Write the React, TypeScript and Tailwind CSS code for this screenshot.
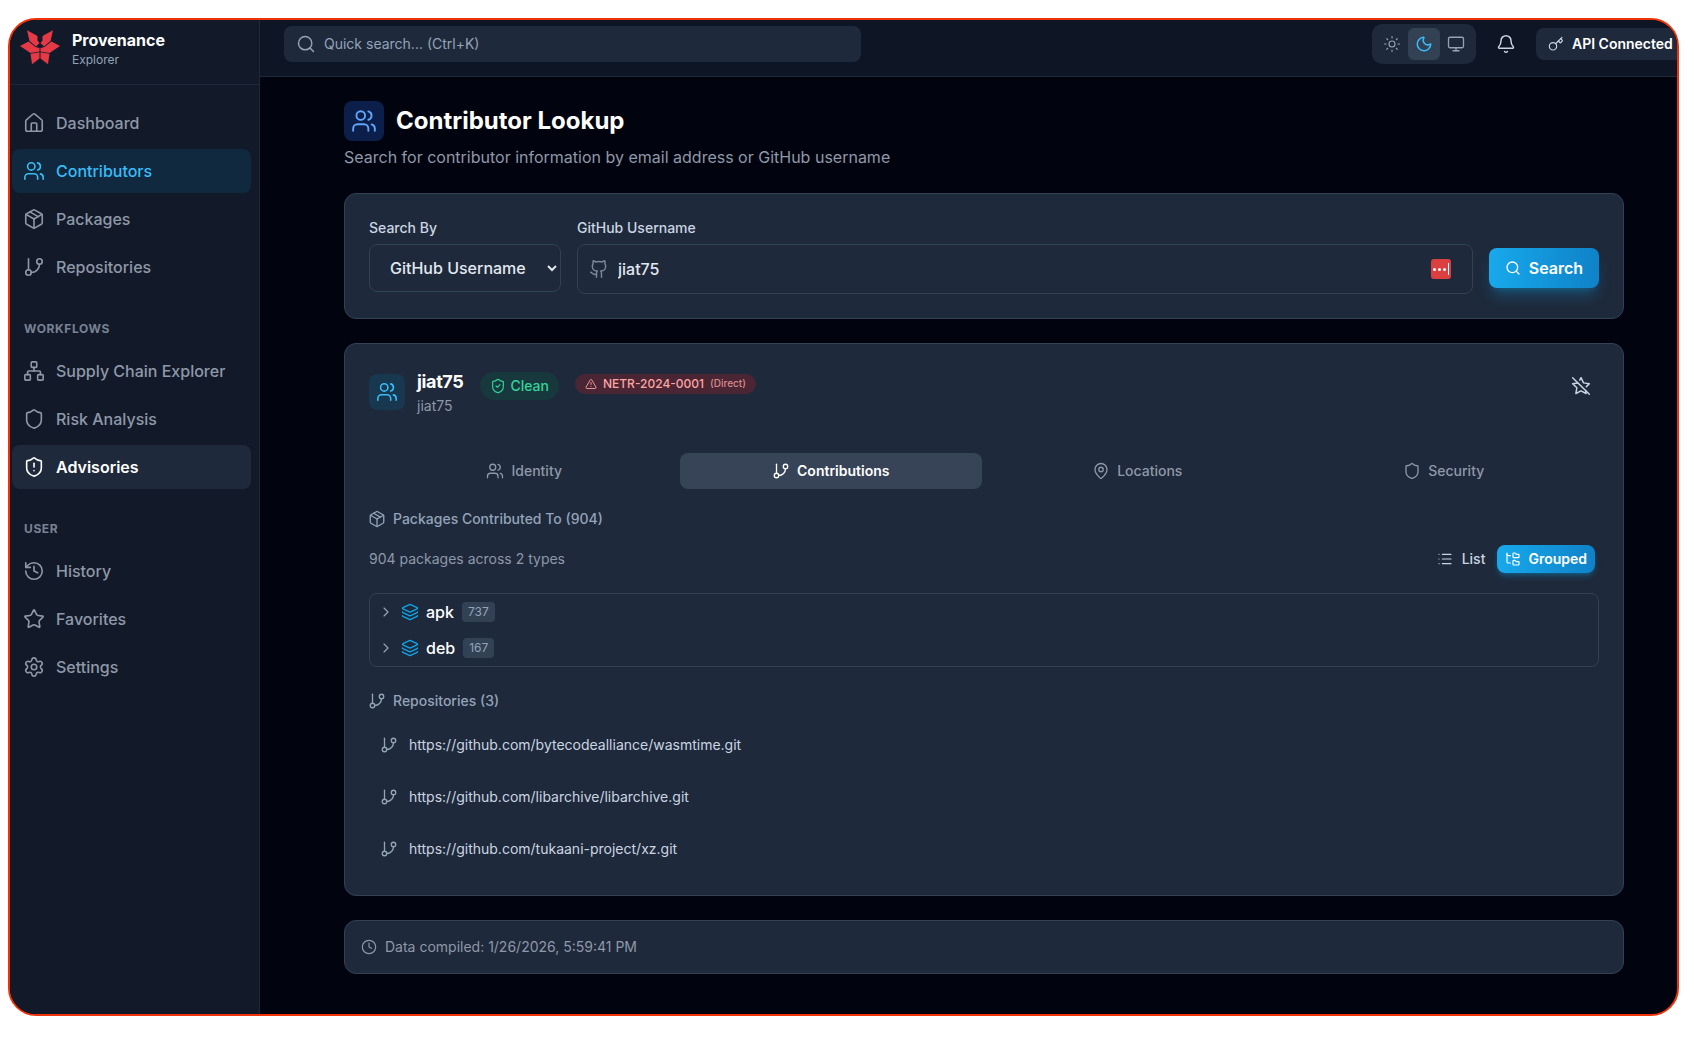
import {
  Bell,
  ChevronRight,
  Clock,
  FolderTree,
  GitBranch,
  Github,
  History,
  House,
  Key,
  Layers,
  List,
  MapPin,
  Monitor,
  Moon,
  Network,
  Package,
  Search,
  Settings,
  Shield,
  ShieldAlert,
  ShieldCheck,
  Star,
  StarOff,
  Sun,
  TriangleAlert,
  Users,
} from "lucide-react";

const mainNav = [
  { label: "Dashboard", icon: House },
  { label: "Contributors", icon: Users, active: "sky" },
  { label: "Packages", icon: Package },
  { label: "Repositories", icon: GitBranch },
];
const workflowNav = [
  { label: "Supply Chain Explorer", icon: Network },
  { label: "Risk Analysis", icon: Shield },
  { label: "Advisories", icon: ShieldAlert, active: "white" },
];
const userNav = [
  { label: "History", icon: History },
  { label: "Favorites", icon: Star },
  { label: "Settings", icon: Settings },
];

const tabs = [
  { label: "Identity", icon: Users },
  { label: "Contributions", icon: GitBranch, active: true },
  { label: "Locations", icon: MapPin },
  { label: "Security", icon: Shield },
];

const groups = [
  { name: "apk", count: 737 },
  { name: "deb", count: 167 },
];

const repos = [
  "https://github.com/bytecodealliance/wasmtime.git",
  "https://github.com/libarchive/libarchive.git",
  "https://github.com/tukaani-project/xz.git",
];

const Logo = () => (
  <svg viewBox="0 0 50 44" className="-mt-2 h-[44px] w-[50px] shrink-0 fill-[#e63946]">
    <polygon points="11,4.3 21.5,10 21.5,14.5 23.5,17 20,20.5 13.5,15" />
    <polygon points="37,4.3 26.5,10 26.5,14.5 24.5,17 28,20.5 34.5,15" />
    <polygon points="4,20 12.5,15.5 19.5,21 23.5,22 23.5,25.5 14.5,27" />
    <polygon points="44,20 35.5,15.5 28.5,21 24.5,22 24.5,25.5 33.5,27" />
    <polygon points="16,38.3 14.5,27.8 23.5,26.2 23.5,32.5" />
    <polygon points="32,38.3 33.5,27.8 24.5,26.2 24.5,32.5" />
  </svg>
);

type NavEntry = { label: string; icon: typeof House; active?: string };

const NavItem = ({ item }: { item: NavEntry }) => {
  const Icon = item.icon;
  const tone =
    item.active === "sky"
      ? "bg-[#10293f] text-[#38bdf8]"
      : item.active === "white"
        ? "bg-[#1e293b] text-white font-semibold"
        : "text-[#8f98a8]";
  return (
    <div className={`flex h-[44px] items-center gap-[11px] rounded-lg px-[11px] text-base font-medium ${tone}`}>
      <Icon className="h-[22px] w-[22px]" strokeWidth={1.75} />
      {item.label}
    </div>
  );
};

const SectionHeading = ({ children }: { children: React.ReactNode }) => (
  <div className="mt-8 mb-3 px-3 text-xs leading-4 font-bold tracking-wider text-[#788294] uppercase">{children}</div>
);

const Sidebar = () => (
  <aside className="flex w-[250px] shrink-0 flex-col border-r border-[#1e293b] bg-[#121a29]">
    <div className="flex h-[65px] items-center gap-[6px] border-b border-[#1e293b] pl-[6px]">
      <Logo />
      <div className="-mt-[7px]">
        <div className="text-base leading-5 font-bold text-white">Provenance</div>
        <div className="mt-[2px] text-xs leading-4 text-[#94a3b8]">Explorer</div>
      </div>
    </div>
    <nav className="flex flex-col pt-4 pr-2 pl-[2px]">
      <div className="flex flex-col gap-1">
        {mainNav.map((item) => (
          <NavItem key={item.label} item={item} />
        ))}
      </div>
      <SectionHeading>Workflows</SectionHeading>
      <div className="flex flex-col gap-1">
        {workflowNav.map((item) => (
          <NavItem key={item.label} item={item} />
        ))}
      </div>
      <SectionHeading>User</SectionHeading>
      <div className="flex flex-col gap-1">
        {userNav.map((item) => (
          <NavItem key={item.label} item={item} />
        ))}
      </div>
    </nav>
  </aside>
);

const TopBar = () => (
  <header className="flex h-[57px] shrink-0 items-center overflow-hidden border-b border-[#1e293b] bg-[#0e1524] pb-2 pl-6">
    <div className="flex h-9 w-[577px] shrink-0 items-center gap-2 rounded-lg bg-[#1e293b] pl-3 text-sm text-[#94a3b8]">
      <Search className="h-5 w-5" strokeWidth={1.75} />
      Quick search... (Ctrl+K)
    </div>
    <div className="ml-[511px] flex h-10 w-[104px] shrink-0 items-center rounded-[10px] bg-[#1e293b] p-1">
      <div className="flex h-8 w-8 items-center justify-center text-[#94a3b8]">
        <Sun className="h-[18px] w-[18px]" strokeWidth={1.5} />
      </div>
      <div className="flex h-8 w-8 items-center justify-center rounded-md bg-[#334155] text-[#38bdf8]">
        <Moon className="h-[18px] w-[18px]" strokeWidth={2} />
      </div>
      <div className="flex h-8 w-8 items-center justify-center text-[#94a3b8]">
        <Monitor className="h-[18px] w-[18px]" strokeWidth={1.75} />
      </div>
    </div>
    <div className="ml-[10px] flex h-10 w-10 shrink-0 items-center justify-center text-[#cbd5e1]">
      <Bell className="h-5 w-5" strokeWidth={1.75} />
    </div>
    <div className="ml-[10px] flex h-8 shrink-0 items-center gap-2 rounded-lg bg-[#1e293b] px-3 text-sm font-semibold whitespace-nowrap text-white">
      <Key className="h-4 w-4 text-[#cbd5e1]" strokeWidth={1.75} />
      API Connected
    </div>
  </header>
);

const SearchCard = () => (
  <section className="mt-6 flex items-start gap-4 rounded-xl border border-[#334155] bg-[#1e293b] px-6 pt-6 pb-6">
    <div className="w-[192px] shrink-0">
      <label className="block text-sm leading-5 font-medium text-[#cbd5e1]">Search By</label>
      <select
        defaultValue="github"
        className="mt-[6px] h-12 w-full rounded-lg border border-[#334155] bg-[#1e293b] pl-4 text-base font-medium text-[#e2e8f0]"
      >
        <option value="github">GitHub Username</option>
        <option value="email">Email Address</option>
      </select>
    </div>
    <div className="min-w-0 flex-1">
      <label className="block text-sm leading-5 font-medium text-[#cbd5e1]">GitHub Username</label>
      <div className="relative mt-[6px]">
        <Github className="absolute top-[15px] left-[12px] h-5 w-5 text-[#7c8798]" strokeWidth={1.75} />
        <input
          defaultValue="jiat75"
          className="h-[50px] w-full rounded-lg border border-[#334155] bg-[#1e293b] pl-[40px] text-base font-medium text-[#e2e8f0] outline-none"
        />
        <div className="absolute top-[15px] right-[22px] flex h-5 w-5 items-center justify-center gap-[2px] rounded-[3px] bg-[#dc3f3f]">
          <span className="h-[3px] w-[3px] rounded-full bg-white" />
          <span className="h-[3px] w-[3px] rounded-full bg-white" />
          <span className="h-[3px] w-[3px] rounded-full bg-white" />
          <span className="h-[12px] w-[1px] bg-white" />
        </div>
      </div>
    </div>
    <button className="mt-[30px] flex h-10 w-[110px] shrink-0 items-center justify-center gap-2 rounded-lg bg-gradient-to-r from-[#18a9ec] to-[#0f82c8] text-base font-semibold text-white shadow-lg shadow-[#0ea5e9]/30">
      <Search className="h-4 w-4" strokeWidth={2} />
      Search
    </button>
  </section>
);

const ResultHeader = () => (
  <div className="flex items-start">
    <div className="flex items-center gap-3">
      <div className="flex h-9 w-9 items-center justify-center rounded-lg bg-[#17384f] text-[#38bdf8]">
        <Users className="h-[22px] w-[22px]" strokeWidth={1.75} />
      </div>
      <div>
        <div className="text-lg leading-7 font-bold tracking-[-0.02em] text-white">jiat75</div>
        <div className="text-sm leading-5 text-[#8f98a8]">jiat75</div>
      </div>
    </div>
    <div className="mt-1 ml-[17px] flex items-start gap-4">
      <span className="flex h-7 items-center gap-1 rounded-full bg-[#17383d] px-[10px] text-sm font-medium text-[#34d399]">
        <ShieldCheck className="h-4 w-4" strokeWidth={1.75} />
        Clean
      </span>
      <span className="mt-[2px] flex h-5 items-center gap-[6px] rounded-full bg-[#4a2533] px-[10px] text-xs font-medium text-[#fca5a5]">
        <TriangleAlert className="h-3 w-3" strokeWidth={1.75} />
        NETR-2024-0001
        <span className="text-[10px] text-[#fca5a5]/80">(Direct)</span>
      </span>
    </div>
    <button className="ml-auto p-2 text-[#cbd5e1]">
      <StarOff className="h-5 w-5" strokeWidth={1.75} />
    </button>
  </div>
);

const TabBar = () => (
  <div className="mt-[33px] flex gap-1 p-1">
    {tabs.map(({ label, icon: Icon, active }) => (
      <div
        key={label}
        className={`flex h-9 flex-1 items-center justify-center gap-[7px] rounded-lg text-sm ${
          active ? "bg-[#374357] font-semibold text-white" : "font-medium text-[#8f98a8]"
        }`}
      >
        <Icon className="h-[18px] w-[18px]" strokeWidth={1.75} />
        {label}
      </div>
    ))}
  </div>
);

const Contributions = () => (
  <>
    <div className="mt-4 -ml-[1px] flex items-center gap-[7px] text-sm leading-5 font-medium text-[#94a3b8]">
      <Package className="h-[18px] w-[18px]" strokeWidth={1.75} />
      Packages Contributed To (904)
    </div>
    <div className="mt-3 flex items-center justify-between">
      <span className="text-sm text-[#8f98a8]">904 packages across 2 types</span>
      <div className="flex gap-1 p-1">
        <button className="flex h-7 items-center gap-[9px] rounded-lg px-2 text-sm font-medium text-[#cbd5e1]">
          <List className="h-4 w-4" strokeWidth={1.75} />
          List
        </button>
        <button className="flex h-7 items-center gap-[7px] rounded-lg bg-gradient-to-r from-[#18a9ec] to-[#0f82c8] px-2 text-sm font-semibold text-white shadow-md shadow-[#0ea5e9]/30">
          <FolderTree className="h-4 w-4" strokeWidth={1.75} />
          Grouped
        </button>
      </div>
    </div>
    <div className="mt-4 rounded-lg border border-[#334155]">
      {groups.map((group) => (
        <div key={group.name} className="flex h-9 items-center gap-[7px] pl-2">
          <ChevronRight className="h-4 w-4 text-[#94a3b8]" strokeWidth={1.75} />
          <Layers className="h-[18px] w-[18px] text-[#0ea5e9]" strokeWidth={1.75} />
          <span className="mr-[1px] text-base font-medium text-white">{group.name}</span>
          <span className="flex h-5 items-center rounded bg-[#334155] px-[6px] text-xs text-[#94a3b8]">{group.count}</span>
        </div>
      ))}
    </div>
    <div className="mt-6 -ml-[1px] flex items-center gap-[7px] text-sm leading-5 font-medium text-[#94a3b8]">
      <GitBranch className="h-[18px] w-[18px]" strokeWidth={1.75} />
      Repositories (3)
    </div>
    <div className="mt-3 flex flex-col gap-2">
      {repos.map((repo) => (
        <div key={repo} className="flex h-11 items-center gap-[11px] pl-[11px] text-sm text-[#cbd5e1]">
          <GitBranch className="h-[18px] w-[18px] text-[#94a3b8]" strokeWidth={1.75} />
          {repo}
        </div>
      ))}
    </div>
  </>
);

export default function App() {
  return (
    <div className="h-[1037px] w-full overflow-hidden bg-white pt-[18px] pl-2 font-['Inter',sans-serif]">
      <div className="flex h-[998px] w-[1671px] overflow-hidden rounded-[28px] border-2 border-[#ee3209] bg-[#01040f]">
        <Sidebar />
        <div className="flex min-w-0 flex-1 flex-col">
          <TopBar />
          <main className="ml-[84px] w-[1280px] flex-1 pt-6">
            <div className="flex items-center gap-3">
              <div className="flex h-10 w-10 items-center justify-center rounded-lg bg-[#0c1f4a] text-[#60a5fa]">
                <Users className="h-[26px] w-[26px]" strokeWidth={1.75} />
              </div>
              <h1 className="text-2xl font-bold text-white">Contributor Lookup</h1>
            </div>
            <p className="mt-1 text-base text-[#8f98a8]">Search for contributor information by email address or GitHub username</p>
            <SearchCard />
            <section className="mt-6 rounded-xl border border-[#334155] bg-[#1e293b] px-6 pt-6 pb-6">
              <ResultHeader />
              <TabBar />
              <Contributions />
            </section>
            <section className="mt-6 flex h-[54px] items-center gap-2 rounded-xl border border-[#334155] bg-[#1e293b] px-4 text-sm text-[#8f98a8]">
              <Clock className="h-4 w-4" strokeWidth={1.75} />
              Data compiled: 1/26/2026, 5:59:41 PM
            </section>
          </main>
        </div>
      </div>
    </div>
  );
}
